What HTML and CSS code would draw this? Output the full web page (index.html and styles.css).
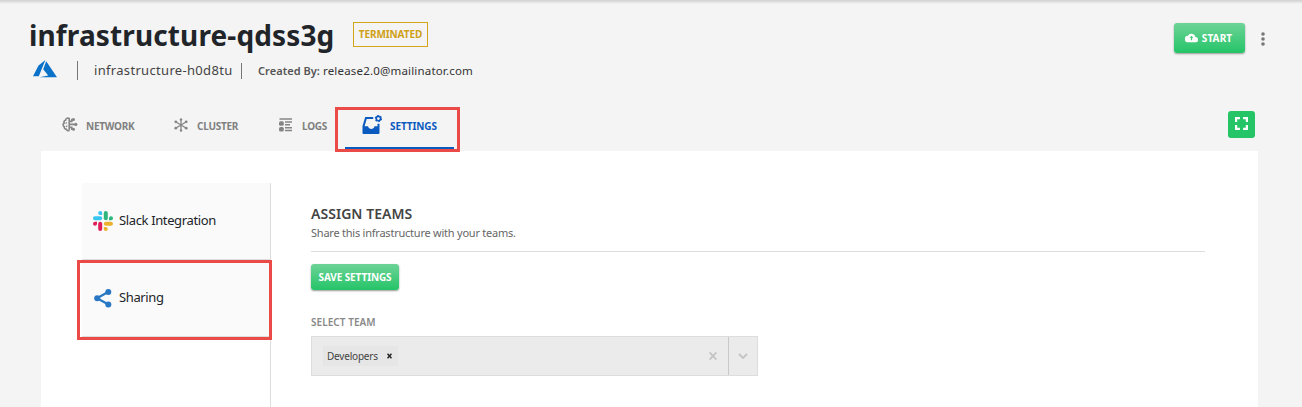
FILE: index.html
```html
<!DOCTYPE html>
<html lang="en">
<head>
<meta charset="utf-8">
<title>Infrastructure settings</title>
<link rel="stylesheet" href="styles.css">
</head>
<body>
<header class="header">
  <div class="heading">
    <div class="title-row">
      <h1 class="title">infrastructure-qdss3g</h1>
      <span class="badge">TERMINATED</span>
    </div>
    <div class="meta">
      <svg class="azure" viewBox="0 0 24 18"><path fill="#0a72c8" d="M12.4 0 5.5 5.6 0 16.2h5.8zM13.2 1.2l-3 8 5 6.2-8.7 1.9H24z"/></svg>
      <span class="divider tall"></span>
      <span class="infra">infrastructure-h0d8tu</span>
      <span class="divider"></span>
      <span class="created">Created By:</span>
      <span class="email">release2.0@mailinator.com</span>
    </div>
  </div>
  <button class="start">
    <svg width="13" height="10" viewBox="0 0 24 18"><path fill="#fff" d="M19.3 7A7.5 7.5 0 0 0 5.3 5 6 6 0 0 0 6 17h13a5 5 0 0 0 .3-10z"/><path fill="#45cc7b" d="M12 5 8.5 9h2.3v4h2.4V9h2.3z"/></svg>
    <span>START</span>
  </button>
  <svg class="dots" width="6" height="14" viewBox="0 0 6 14"><g fill="#777"><circle cx="3" cy="2" r="1.8"/><circle cx="3" cy="7" r="1.8"/><circle cx="3" cy="12" r="1.8"/></g></svg>
</header>
<nav class="tabs">
  <a class="tab network">
    <svg width="16" height="15" viewBox="0 0 16 15" fill="none" stroke="#858585" stroke-width="1.6"><path d="M7.2 13.3V1.4C5.5.6 3.6 1.5 3.6 3.2 2 3.5 1.6 5 2.2 6 .7 7 .9 9 2.3 9.7c-.3 1.6.8 2.4 1.8 2.4.5 1.5 2.2 2 3.1 1.2M7.2 7.4H13M7.2 4.4h2.6V2.6h1.2M7.2 10.4h2.6v1.8H11"/><path stroke-width="1.1" d="m4.6 5.2-.8 1.5M3.8 9.8l1.6-1"/><g fill="#858585" stroke="none"><circle cx="11.5" cy="2.4" r="1.5"/><circle cx="13.8" cy="7.4" r="1.6"/><circle cx="11.5" cy="12.3" r="1.5"/></g></svg>
    <span>NETWORK</span>
  </a>
  <a class="tab cluster">
    <svg width="14" height="14" viewBox="0 0 14 14" fill="#858585"><path stroke="#858585" stroke-width="1.3" d="M7 2v10M2 4l10 6M2 10l10-6"/><circle cx="7" cy="1.5" r="1.2"/><circle cx="7" cy="12.5" r="1.2"/><circle cx="1.8" cy="3.8" r="1.4"/><circle cx="12.2" cy="3.8" r="1.4"/><circle cx="1.8" cy="10.2" r="1.4"/><circle cx="12.2" cy="10.2" r="1.4"/></svg>
    <span>CLUSTER</span>
  </a>
  <a class="tab logs">
    <svg width="14" height="14" viewBox="0 0 14 14" fill="#858585"><path stroke="#858585" stroke-width="1.5" d="M.5 1H13M6 4h7M6 6.8h5M6 9.8h7M6 12.6h7"/><rect y="3.3" width="4.8" height="4.4" rx="1.5"/><rect y="9" width="4.8" height="4.4" rx="1.5"/></svg>
    <span>LOGS</span>
  </a>
  <a class="tab settings">
    <svg width="21" height="20" viewBox="0 0 21 20"><path fill="#0b5abf" fill-rule="evenodd" d="M3.2 2h8v1.9H4.7L2.6 11.3H6c1 3.6 5.6 3.6 6.6 0h2.9V8.8h2v8.9c0 .8-.5 1.3-1.3 1.3H1.8c-.8 0-1.3-.5-1.3-1.3V11z"/><circle cx="16.4" cy="3.6" r="2.2" fill="none" stroke="#0b5abf" stroke-width="1.6"/><circle cx="16.4" cy="3.6" r="3.1" fill="none" stroke="#0b5abf" stroke-width="1.1" stroke-dasharray="1.6 1.646"/></svg>
    <span>SETTINGS</span>
    <i class="highlight"></i>
  </a>
  <button class="expand"><svg width="13" height="13" viewBox="0 0 13 13" fill="none" stroke="#fff" stroke-width="2.2"><path d="M1.1 4.9V1.1h3.8M8.1 1.1h3.8v3.8M11.9 8.1v3.8H8.1M4.9 11.9H1.1V8.1"/></svg></button>
</nav>
<main class="panel">
  <aside class="side">
    <div class="item">
      <svg width="20" height="20" viewBox="0 0 20 20"><g fill="#36c5f0"><rect x="0" y="5.2" width="9.2" height="4" rx="2"/><path d="M7.2 0a2 2 0 0 0 0 4h2V2a2 2 0 0 0-2-2"/></g><g fill="#2eb67d"><rect x="10.8" width="4" height="9.2" rx="2"/><path d="M20 7.2a2 2 0 0 0-4 0v2h2a2 2 0 0 0 2-2"/></g><g fill="#ecb22e"><rect x="10.8" y="10.8" width="9.2" height="4" rx="2"/><path d="M12.8 20a2 2 0 0 0 0-4h-2v2a2 2 0 0 0 2 2"/></g><g fill="#e01e5a"><rect x="5.2" y="10.8" width="4" height="9.2" rx="2"/><path d="M0 12.8a2 2 0 0 0 4 0v-2H2a2 2 0 0 0-2 2"/></g></svg>
      <span class="item-label">Slack Integration</span>
    </div>
    <div class="item sharing">
      <svg width="20" height="20" viewBox="0 0 20 20"><path d="M15.5 3.7 4 10.2l11.5 6.3" fill="none" stroke="#2777c4" stroke-width="2.2"/><g fill="#2777c4"><circle cx="15.3" cy="3.9" r="3"/><circle cx="4.2" cy="10.2" r="3"/><circle cx="15.3" cy="16.5" r="3"/></g></svg>
      <span class="item-label">Sharing</span>
      <i class="highlight"></i>
    </div>
  </aside>
  <section class="content">
    <h2 class="section-title">ASSIGN TEAMS</h2>
    <p class="subtitle">Share this infrastructure with your teams.</p>
    <button class="save"><span>SAVE SETTINGS</span></button>
    <div class="label">SELECT TEAM</div>
    <div class="select">
      <span class="tag"><span class="tag-text">Developers</span><svg width="5" height="6" viewBox="0 0 5 6"><path d="m.5.7 4 4.6m0-4.6-4 4.6" stroke="#222" stroke-width="1.5"/></svg></span>
      <svg class="clear" width="8" height="8" viewBox="0 0 8 8"><path d="m.6.4 6.8 7.2m0-7.2L.6 7.6" stroke="#c4c4c4" stroke-width="1.8"/></svg>
      <span class="arrow"><svg width="10" height="6" viewBox="0 0 10 6"><path d="m1 1 4 4 4-4" fill="none" stroke="#c4c4c4" stroke-width="1.8"/></svg></span>
    </div>
  </section>
</main>
</body>
</html>
```
FILE: styles.css
```css
* { box-sizing: border-box; }
body { margin: 0; height: 407px; overflow: hidden; background: #f4f4f4 linear-gradient(#d0d0d0, #f4f4f4) 0 0 / 100% 4px no-repeat; font-family: "Noto Sans", sans-serif; color: #212529; white-space: nowrap; display: flex; flex-direction: column; }
h1, h2, p { margin: 0; }
button { border: 0; padding: 0; font-family: inherit; color: #fff; display: flex; align-items: center; justify-content: center; }
svg { flex: none; display: block; }
.header { height: 107px; padding: 15px 36px 0 29px; display: flex; align-items: flex-start; }
.heading { flex: 1; }
.title-row { display: flex; height: 39px; align-items: center; }
.title { width: 324px; font-size: 28px; line-height: 40px; font-weight: 700; letter-spacing: .13px; }
.badge { width: 75px; height: 25px; border: 1px solid #d2a51c; color: #cfa018; font-size: 10px; font-weight: 700; letter-spacing: -.1px; line-height: 23px; text-align: center; }
.meta { display: flex; align-items: center; height: 33px; padding-left: 4px; }
.azure { width: 24px; height: 18px; margin: -3px 20px 0 0; }
.divider { width: 1px; height: 16px; background: #777; }
.divider.tall { height: 19px; }
.infra { width: 163px; padding-left: 16px; margin-top: -2px; font-size: 13px; letter-spacing: .32px; color: #444; }
.created { width: 64px; margin-left: 16px; font-size: 11px; font-weight: 600; letter-spacing: .05px; color: #555; }
.email { margin-left: 1px; font-size: 11.5px; letter-spacing: .18px; color: #333; }
.start { width: 71px; height: 30px; margin-top: 8px; padding-bottom: 1px; gap: 4px; border-radius: 3px; background: linear-gradient(#6dd397, #25c468); box-shadow: 0 1px 2px #999; font-size: 10px; font-weight: 700; letter-spacing: .1px; }
.start svg { margin-left: -2px; }
.dots { margin: 17px 0 0 15px; }
.tabs { height: 44px; padding: 0 47px 0 62px; display: flex; }
.tab { display: flex; align-items: center; height: 38px; color: #808080; font-size: 10px; font-weight: 700; letter-spacing: -.25px; }
.network { width: 112px; gap: 8px; }
.network svg, .cluster svg, .logs svg { margin-top: -3px; }
.cluster { width: 105px; gap: 9px; }
.logs { width: 66px; gap: 9px; }
.settings { position: relative; width: 109px; height: 42px; padding: 0 0 3px 17px; gap: 7px; color: #0b5abf; border-bottom: 2px solid #0b5abf; letter-spacing: -.1px; }
.settings svg { margin-top: -2px; }
.highlight { position: absolute; border: 3px solid #ea4b46; pointer-events: none; }
.settings .highlight { left: -10px; top: 0; width: 125px; height: 45px; z-index: 2; }
.expand { width: 27px; height: 27px; margin: 4px 0 0 auto; padding-bottom: 2px; border-radius: 3px; background: #25c466; }
.panel { width: 1217px; flex: 1; margin-left: 41px; padding: 32px 53px 0 41px; background: #fff; display: flex; }
.side { width: 189px; border-right: 1px solid #ddd; }
.item { position: relative; display: flex; align-items: center; gap: 6px; height: 77px; padding-left: 11px; background: #fafafa; border-bottom: 1px solid #ddd; font-size: 13px; }
.item-label { margin-top: -2px; letter-spacing: -.37px; }
.sharing .highlight { left: -5px; top: 0; width: 195px; height: 80px; }
.content { flex: 1; padding: 20px 0 0 40px; }
.section-title { font-size: 14px; font-weight: 600; line-height: 22px; letter-spacing: .04px; color: #444; }
.subtitle { height: 27px; line-height: 16px; border-bottom: 1px solid #ddd; font-size: 11px; letter-spacing: -.23px; color: #666; }
.save { width: 88px; height: 26px; margin-top: 12px; padding-bottom: 1px; border-radius: 3px; background: linear-gradient(#6dd397, #25c468); box-shadow: 0 1px 2px #999; font-size: 10px; font-weight: 700; letter-spacing: -.1px; }
.label { margin: 24px 0 6px; height: 16px; line-height: 16px; font-size: 10px; font-weight: 600; letter-spacing: .05px; color: #888; }
.select { width: 447px; height: 40px; background: #ebebeb; border: 1px solid #ddd; display: flex; align-items: center; }
.tag { width: 75px; height: 20px; margin-left: 11px; padding: 0 6px 0 4px; background: #e6e6e6; display: flex; align-items: center; justify-content: space-between; font-size: 10px; letter-spacing: -.2px; color: #444; }
.tag-text { margin-top: -1px; }
.clear { margin-left: auto; margin-right: 11px; }
.arrow { width: 29px; height: 38px; border-left: 1px solid #c8c8c8; display: flex; align-items: center; justify-content: center; }
```
